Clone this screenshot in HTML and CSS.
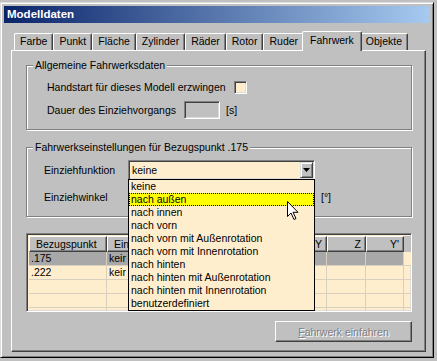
FILE: index.html
```html
<!DOCTYPE html>
<html lang="de">
<head>
    <meta charset="UTF-8">
    <meta name="viewport" content="width=device-width, initial-scale=1.0">
    <title>Modelldaten</title>
    <link rel="stylesheet" href="styles.css">
</head>
<body>
    <div class="window">
        <div class="titlebar">Modelldaten</div>

        <!-- Registerkarten -->
        <div class="tabs">
            <div class="tab">Farbe</div>
            <div class="tab">Punkt</div>
            <div class="tab">Fläche</div>
            <div class="tab">Zylinder</div>
            <div class="tab">Räder</div>
            <div class="tab">Rotor</div>
            <div class="tab">Ruder</div>
            <div class="tab active">Fahrwerk</div>
            <div class="tab">Objekte</div>
        </div>

        <div class="panel">
            <fieldset class="group group-general">
                <legend>Allgemeine Fahrwerksdaten</legend>
                <div class="row row-first">
                    <span class="label label-handstart">Handstart für dieses Modell erzwingen</span>
                    <span class="checkbox"></span>
                </div>
                <div class="row row-second">
                    <span class="label label-duration">Dauer des Einziehvorgangs</span>
                    <span class="field field-small"></span>
                    <span class="unit">[s]</span>
                </div>
            </fieldset>

            <fieldset class="group group-point">
                <legend>Fahrwerkseinstellungen für Bezugspunkt .175</legend>
                <div class="form-grid">
                    <span class="label">Einziehfunktion</span>
                    <div class="combo">
                        <span class="combo-value">keine</span>
                        <span class="combo-button">
                            <svg width="7" height="4" viewBox="0 0 7 4"><path d="M0 0h7L3.5 4z" fill="#000"/></svg>
                        </span>

                        <!-- aufgeklappte Liste -->
                        <ul class="dropdown">
                            <li>keine</li>
                            <li class="hover">nach außen</li>
                            <li>nach innen</li>
                            <li>nach vorn</li>
                            <li>nach vorn mit Außenrotation</li>
                            <li>nach vorn mit Innenrotation</li>
                            <li>nach hinten</li>
                            <li>nach hinten mit Außenrotation</li>
                            <li>nach hinten mit Innenrotation</li>
                            <li>benutzerdefiniert</li>
                            <svg class="cursor" width="12" height="19" viewBox="0 0 12 19">
                                <path d="M0.5 0.5v15l3.5-3.5 3 6.5 2-1-3-6.2h5z" fill="#fff" stroke="#000" stroke-width="1"/>
                            </svg>
                        </ul>
                    </div>
                    <span></span>
                    <span class="label">Einziehwinkel</span>
                    <span class="field field-wide"></span>
                    <span class="unit">[°]</span>
                </div>
            </fieldset>

            <!-- Bezugspunkte -->
            <div class="grid-wrap">
                <table class="grid">
                    <colgroup>
                        <col style="width:78px">
                        <col style="width:95px">
                        <col style="width:55px">
                        <col style="width:35px">
                        <col style="width:35px">
                        <col style="width:39px">
                        <col style="width:38px">
                        <col style="width:7px">
                    </colgroup>
                    <thead>
                        <tr>
                            <th>Bezugspunkt</th>
                            <th>Einz</th>
                            <th></th>
                            <th class="num"></th>
                            <th class="num">Y</th>
                            <th class="num">Z</th>
                            <th class="num">Y'</th>
                            <th class="blank"></th>
                        </tr>
                    </thead>
                    <tbody>
                        <tr class="selected">
                            <td>.175</td><td>keir</td><td></td><td></td><td></td><td></td><td></td><td class="blank"></td>
                        </tr>
                        <tr>
                            <td>.222</td><td>keir</td><td></td><td></td><td></td><td></td><td></td><td class="blank"></td>
                        </tr>
                        <tr>
                            <td></td><td></td><td></td><td></td><td></td><td></td><td></td><td class="blank"></td>
                        </tr>
                        <tr>
                            <td></td><td></td><td></td><td></td><td></td><td></td><td></td><td class="blank"></td>
                        </tr>
                        <tr>
                            <td></td><td></td><td></td><td></td><td></td><td></td><td></td><td class="blank"></td>
                        </tr>
                    </tbody>
                </table>
            </div>

            <div class="actions">
                <button class="btn" disabled><u>F</u>ahrwerk einfahren</button>
            </div>
        </div>
    </div>
</body>
</html>
```

FILE: styles.css
```css
body {
    margin: 0;
    background: #c0c0c0;
    font-family: 'Liberation Sans', Arial, sans-serif;
    font-size: 10.5px;
    color: #000;
}

.window {
    margin-top: 2px;
    width: 434px;
    height: 356px;
    box-sizing: border-box;
    background: #c0c0c0;
    border: 1px solid;
    border-color: #dcdcdc #000 #000 #dcdcdc;
    box-shadow: inset 1px 1px #fff, inset -1px -1px #808080;
    padding: 3px;
    display: flex;
    flex-direction: column;
}

.titlebar {
    height: 17px;
    line-height: 17px;
    padding-left: 3px;
    background: linear-gradient(90deg, #0a246a, #a6caf0);
    color: #fff;
    font-weight: bold;
    font-size: 11.5px;
}

/* Registerkarten */
.tabs {
    display: flex;
    align-items: flex-end;
    height: 27px;
    margin-left: 7px;
    padding-left: 3px;
}

.tab {
    height: 17px;
    line-height: 15px;
    box-sizing: border-box;
    padding: 0 5px;
    border: 1px solid;
    border-bottom: none;
    border-color: #fff #404040 transparent #fff;
    box-shadow: inset -1px 0 #808080;
    border-radius: 2px 2px 0 0;
    white-space: nowrap;
}

.tab.active {
    position: relative;
    z-index: 1;
    height: 20px;
    margin: 0 -2px -1px;
    padding: 0 7px;
    background: #c0c0c0;
    line-height: 17px;
}

.panel {
    margin-left: 7px;
    width: 415px;
    height: 302px;
    box-sizing: border-box;
    border: 1px solid;
    border-color: #fff #404040 #404040 #fff;
    box-shadow: inset -1px -1px #808080;
    padding: 8px 13px 0 14px;
}

/* Gruppenrahmen */
.group {
    margin: 0;
    padding: 0 0 10px 0;
    border: 1px solid #808080;
    box-shadow: inset 1px 1px #fff, 1px 1px #fff;
    min-width: 0;
}

.group legend {
    margin-left: 6px;
    padding: 0 2px;
    line-height: 13px;
    background: #c0c0c0;
}

.group-point {
    margin-top: 11px;
}

.row {
    display: flex;
    align-items: center;
    padding-left: 20px;
}

.row-first {
    height: 14px;
    margin-top: 8px;
}

.row-second {
    height: 18px;
    margin-top: 7px;
}

.label-handstart {
    width: 187px;
}

.label-duration {
    width: 137px;
}

.checkbox {
    width: 13px;
    height: 13px;
    box-sizing: border-box;
    background: #ffeecd;
    border: 1px solid;
    border-color: #808080 #fff #fff #808080;
    box-shadow: inset 1px 1px #404040, inset -1px -1px #dcdcdc;
}

.field {
    display: block;
    height: 18px;
    box-sizing: border-box;
    border: 1px solid;
    border-color: #808080 #fff #fff #808080;
    box-shadow: inset 1px 1px #404040, inset -1px -1px #dcdcdc;
    background: #c0c0c0;
}

.field-small {
    width: 36px;
}

.field-wide {
    width: 187px;
}

.unit {
    margin-left: 6px;
}

.form-grid {
    display: grid;
    grid-template-columns: 84px 187px auto;
    grid-template-rows: 20px 18px;
    row-gap: 8px;
    align-items: center;
    margin-top: 6px;
    padding-left: 17px;
}

/* Kombinationsfeld */
.combo {
    position: relative;
    height: 20px;
    box-sizing: border-box;
    border: 1px solid;
    border-color: #808080 #fff #fff #808080;
    box-shadow: inset 1px 1px #404040, inset -1px -1px #dcdcdc;
    background: #ffeecd;
    display: flex;
    align-items: center;
}

.combo-value {
    flex: 1;
    padding-left: 3px;
}

.combo-button {
    display: flex;
    align-items: center;
    justify-content: center;
    width: 13px;
    height: 16px;
    margin-right: 1px;
    box-sizing: border-box;
    background: #c0c0c0;
    border: 1px solid;
    border-color: #dcdcdc #404040 #404040 #dcdcdc;
    box-shadow: inset 1px 1px #fff, inset -1px -1px #808080;
}

.dropdown {
    position: absolute;
    z-index: 5;
    top: 18px;
    left: -1px;
    width: 187px;
    box-sizing: border-box;
    margin: 0;
    padding: 0;
    list-style: none;
    background: #ffeecd;
    border: 1px solid #000;
}

.dropdown li {
    height: 13px;
    line-height: 13px;
    padding-left: 2px;
    white-space: nowrap;
}

.dropdown li.hover {
    background: #ffff00;
    outline: 1px dotted #000;
    outline-offset: -1px;
}

.cursor {
    position: absolute;
    left: 158px;
    top: 21px;
}

/* Tabelle */
.grid-wrap {
    margin-top: 16px;
    height: 79px;
    box-sizing: border-box;
    border: 1px solid;
    border-color: #808080 #fff #fff #808080;
    box-shadow: inset 1px 1px #404040, inset -1px -1px #dcdcdc;
    padding: 2px 1px 0 2px;
    overflow: hidden;
    background: #ffeecd;
}

.grid {
    width: 382px;
    table-layout: fixed;
    border-collapse: separate;
    border-spacing: 0;
}

.grid th {
    height: 16px;
    box-sizing: border-box;
    padding: 0 4px 0 6px;
    font-weight: normal;
    text-align: left;
    white-space: nowrap;
    overflow: hidden;
    background: #c0c0c0;
    border: 1px solid;
    border-color: #fff #404040 #404040 #fff;
    box-shadow: inset -1px -1px #808080;
}

.grid th.num {
    text-align: right;
}

.grid th.blank {
    border: none;
    box-shadow: none;
}

.grid td {
    height: 14px;
    box-sizing: border-box;
    padding: 0 2px;
    line-height: 13px;
    white-space: nowrap;
    overflow: hidden;
    border-right: 1px solid #d8cfbe;
    border-bottom: 1px solid #d8cfbe;
}

.grid td.blank {
    border-right: none;
}

.grid tr.selected td {
    background: #a8a8a8;
}

.grid tr.selected td.blank {
    background: #ffeecd;
}

.actions {
    display: flex;
    justify-content: flex-end;
    margin-top: 9px;
}

.btn {
    width: 137px;
    height: 21px;
    padding: 0;
    font-family: inherit;
    font-size: 10.5px;
    color: #808080;
    text-shadow: 1px 1px #fff;
    background: #c0c0c0;
    border: 1px solid;
    border-color: #fff #404040 #404040 #fff;
    box-shadow: inset -1px -1px #808080;
}
```
